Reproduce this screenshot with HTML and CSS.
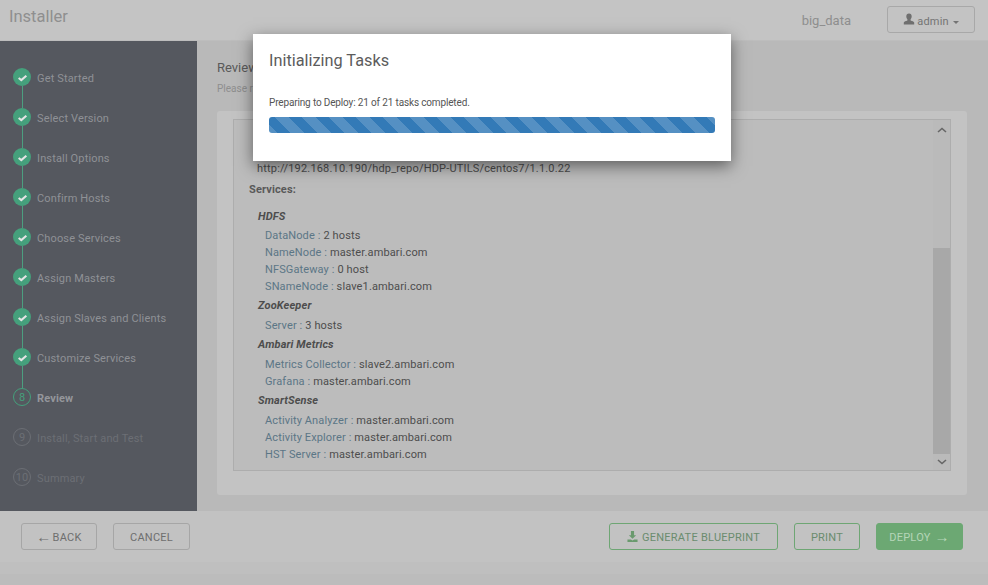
FILE: index.html
```html
<!DOCTYPE html>
<html lang="en">
<head>
<meta charset="utf-8">
<title>Installer</title>
<link rel="stylesheet" href="styles.css">
</head>
<body>
<div class="app">
  <header class="topbar">
    <div class="brand">Installer</div>
    <div class="cluster">big_data</div>
    <button class="user-btn">
      <svg class="user-icon" viewBox="0 0 12 12"><path d="M6 0.5c-1.800 0-2.700 1.300-2.700 3 0 1.200.5 2.200 1.100 2.800v1.100c-1.600.5-3.400 1-3.600 2.200v1.900h10.400v-1.900c-.2-1.200-2-1.700-3.600-2.200v-1.100c.6-.6 1.100-1.600 1.100-2.800 0-1.700-.9-3-2.700-3z"/></svg>
      <span>admin</span><i class="caret"></i>
    </button>
  </header>
  <div class="body">
    <nav class="steps">
      <div class="step done"><span class="dot"><svg viewBox="0 0 12 12"><path d="M1.800 6.500l2.900 2.300 5.500-4.800" /></svg></span><span class="label">Get Started</span></div>
      <div class="step done"><span class="dot"><svg viewBox="0 0 12 12"><path d="M1.800 6.500l2.900 2.300 5.500-4.800" /></svg></span><span class="label">Select Version</span></div>
      <div class="step done"><span class="dot"><svg viewBox="0 0 12 12"><path d="M1.800 6.500l2.900 2.300 5.500-4.800" /></svg></span><span class="label">Install Options</span></div>
      <div class="step done"><span class="dot"><svg viewBox="0 0 12 12"><path d="M1.800 6.500l2.900 2.300 5.500-4.800" /></svg></span><span class="label">Confirm Hosts</span></div>
      <div class="step done"><span class="dot"><svg viewBox="0 0 12 12"><path d="M1.800 6.500l2.900 2.300 5.500-4.800" /></svg></span><span class="label">Choose Services</span></div>
      <div class="step done"><span class="dot"><svg viewBox="0 0 12 12"><path d="M1.800 6.500l2.900 2.300 5.500-4.800" /></svg></span><span class="label">Assign Masters</span></div>
      <div class="step done"><span class="dot"><svg viewBox="0 0 12 12"><path d="M1.800 6.500l2.900 2.300 5.500-4.800" /></svg></span><span class="label">Assign Slaves and Clients</span></div>
      <div class="step done"><span class="dot"><svg viewBox="0 0 12 12"><path d="M1.800 6.500l2.900 2.300 5.500-4.800" /></svg></span><span class="label">Customize Services</span></div>
      <div class="step current"><span class="dot">8</span><span class="label">Review</span></div>
      <div class="step todo"><span class="dot">9</span><span class="label">Install, Start and Test</span></div>
      <div class="step todo"><span class="dot">10</span><span class="label">Summary</span></div>
    </nav>
    <main class="content">
      <h2 class="title">Review</h2>
      <p class="subtitle">Please review the configuration before installation</p>
      <section class="panel">
        <div class="review-box">
          <div class="review-scroll">
            <div class="url">http://192.168.10.190/hdp_repo/HDP-UTILS/centos7/1.1.0.22</div>
            <div class="services">Services:</div>
            <div class="svc first">HDFS</div>
            <div class="row"><b>DataNode :</b> 2 hosts</div>
            <div class="row"><b>NameNode :</b> master.ambari.com</div>
            <div class="row"><b>NFSGateway :</b> 0 host</div>
            <div class="row"><b>SNameNode :</b> slave1.ambari.com</div>
            <div class="svc">ZooKeeper</div>
            <div class="row"><b>Server :</b> 3 hosts</div>
            <div class="svc">Ambari Metrics</div>
            <div class="row"><b>Metrics Collector :</b> slave2.ambari.com</div>
            <div class="row"><b>Grafana :</b> master.ambari.com</div>
            <div class="svc">SmartSense</div>
            <div class="row"><b>Activity Analyzer :</b> master.ambari.com</div>
            <div class="row"><b>Activity Explorer :</b> master.ambari.com</div>
            <div class="row"><b>HST Server :</b> master.ambari.com</div>
          </div>
          <div class="scrollbar">
            <svg class="arrow up" viewBox="0 0 10 6"><path d="M1 5l4-3.500 4 3.500"/></svg>
            <div class="track"><div class="thumb"></div></div>
            <svg class="arrow" viewBox="0 0 10 6"><path d="M1 1l4 3.500 4-3.500"/></svg>
          </div>
        </div>
      </section>
    </main>
  </div>
  <footer class="actions">
    <button class="btn back"><span class="arr">&#8592;</span> BACK</button>
    <button class="btn cancel">CANCEL</button>
    <span class="spacer"></span>
    <button class="btn green blueprint">
      <svg class="dl" viewBox="0 0 12 12"><path d="M4.300 0h3.400v4.500h2.300L6 8.500 2 4.500h2.300zM0.500 9.300h3.700L6 10.300l1.800-1h3.700V12H.5z"/></svg>
      GENERATE BLUEPRINT</button>
    <button class="btn green print">PRINT</button>
    <button class="btn solid">DEPLOY <span class="arr">&#8594;</span></button>
  </footer>
  <div class="bottom"></div>
</div>
<div class="modal">
  <h3 class="modal-title">Initializing Tasks</h3>
  <p class="modal-text">Preparing to Deploy: 21 of 21 tasks completed.</p>
  <div class="progress"></div>
</div>
</body>
</html>
```
FILE: styles.css
```css
* { box-sizing: border-box; }
html, body { margin: 0; height: 100%; overflow: hidden; }
body { font-family: Roboto, "Liberation Sans", sans-serif; background: #bcbcbc; position: relative; }
.app { height: 585px; display: flex; flex-direction: column; }

.topbar { height: 41px; flex: none; display: flex; align-items: flex-start; background: #c4c4c4; border-bottom: 1px solid #bdbdbd; }
.brand { margin: 6px 0 0 9px; font-size: 16.500px; line-height: 22px; color: #8f8f8f; flex: 1; }
.cluster { margin: 13px 36px 0 0; font-size: 13px; line-height: 16px; color: #8e8e8e; }
.user-btn { margin: 6px 13px 0 0; width: 88px; height: 27px; display: flex; align-items: center; justify-content: center; gap: 2px; padding: 3px 0 0; background: #c3c3c3; border: 1px solid #a8a8a8; border-radius: 3px; font: 11px Roboto, sans-serif; letter-spacing: .2px; color: #747474; }
.user-icon { width: 12px; height: 12px; fill: #6f6f6f; margin-top: -4px; }
.caret { width: 0; height: 0; border: 3px solid transparent; border-top-color: #747474; border-bottom: 0; margin-left: 2px; margin-top: 2px; }

.body { height: 470px; flex: none; display: flex; }
.steps { width: 197px; flex: none; background: #55585f; padding-top: 27px; }
.step { height: 40px; display: flex; align-items: flex-start; padding-left: 13px; position: relative; }
.step.done::after { content: ""; position: absolute; left: 22px; top: 18px; width: 1px; height: 22px; background: #4c9f80; }
.dot { width: 18px; height: 18px; border-radius: 50%; flex: none; display: flex; align-items: center; justify-content: center; font-size: 11px; line-height: 1; position: relative; z-index: 1; }
.dot svg { width: 11px; height: 11px; fill: none; stroke: #e4e4e4; stroke-width: 2.200; }
.label { margin: 1px 0 0 6px; font-size: 11px; line-height: 20px; letter-spacing: .15px; color: #8f9196; }
.done .dot { background: #45a07c; }
.current .dot { border: 1px solid #45a07c; color: #45a07c; }
.current .label { font-weight: 700; color: #94969b; }
.todo .dot { border: 1px solid #6c6f75; color: #6c6f75; }
.todo .label { color: #6c6f75; }

.content { flex: 1; background: #b9b9b9; padding: 19px 21px 16px 20px; display: flex; flex-direction: column; }
.title { margin: 0; font-size: 13px; line-height: 16px; font-weight: 400; color: #5a5a5a; }
.subtitle { margin: 6px 0 0; font-size: 10px; line-height: 14px; color: #8e8e8e; white-space: nowrap; }
.panel { margin-top: 15px; flex: 1; background: #c3c3c3; border-radius: 3px; padding: 8px 16px 24px; display: flex; min-height: 0; }
.review-box { flex: 1; display: flex; border: 1px solid #adadad; background: #bcbcbc; min-width: 0; }
.review-scroll { flex: 1; overflow: hidden; display: flex; flex-direction: column; justify-content: flex-end; padding: 0 0 7px 15px; font-size: 11px; line-height: 17px; color: #4d4d4d; letter-spacing: .13px; }
.url { padding-left: 8px; font-size: 11px; letter-spacing: .18px; }
.services { margin-top: 4px; font-weight: 700; color: #595959; }
.svc { font-weight: 700; font-style: italic; color: #4d4d4d; padding-left: 9px; margin: 2px 0 3px; line-height: 17px; }
.svc.first { margin: 10px 0 2px; }
.row { padding-left: 16px; }
.row b { font-weight: 400; color: #5b7686; letter-spacing: .12px; }
.scrollbar { width: 17px; flex: none; display: flex; flex-direction: column; align-items: center; background: #bababa; }
.arrow { width: 10px; height: 6px; fill: none; stroke: #666; stroke-width: 1.600; flex: none; margin: 5px 0; }
.arrow.up { margin-top: 7px; }
.track { flex: 1; width: 100%; display: flex; align-items: flex-end; }
.thumb { width: 100%; height: 206px; background: #a8a8a8; }

.actions { height: 51px; flex: none; display: flex; align-items: flex-start; gap: 16px; padding: 12px 25px 0 21px; background: #c2c2c2; }
.btn { height: 27px; padding: 2px 0 0; border: 1px solid #a6a6a6; border-radius: 3px; background: transparent; font: 11px Roboto, sans-serif; letter-spacing: .25px; color: #6e6e6e; display: flex; align-items: center; justify-content: center; gap: 4px; }
.btn .arr { font-size: 15px; line-height: 12px; margin-top: -1px; }
.back { width: 76px; gap: 1px; }
.cancel { width: 77px; }
.spacer { flex: 1; }
.green { border-color: #6ea674; color: #6a8c6e; }
.blueprint { width: 169px; }
.print { width: 66px; }
.solid { width: 87px; background: #6ca873; border-color: #6ca873; color: #b5d6b8; }
.dl { width: 11px; height: 11px; fill: #6a9a6e; margin-top: -3px; }
.bottom { flex: 1; background: linear-gradient(#bfbfbf 0 12px, #bcbcbc 12px); }

.modal { position: absolute; left: 253px; top: 34px; width: 478px; height: 127px; background: #fff; box-shadow: 0 5px 15px rgba(0,0,0,.5); padding: 16px 16px 0; }
.modal-title { margin: 1px 0 0; font-size: 16.300px; line-height: 20px; font-weight: 400; color: #5c5c5c; }
.modal-text { margin: 25px 0 0; font-size: 10px; line-height: 14px; letter-spacing: -.15px; color: #555; }
.progress { margin-top: 7px; height: 16px; border-radius: 3px; background-color: #337ab7; background-image: linear-gradient(45deg, rgba(255,255,255,.17) 25%, transparent 25%, transparent 50%, rgba(255,255,255,.17) 50%, rgba(255,255,255,.17) 75%, transparent 75%, transparent); background-size: 27px 27px; background-position: 6px 0; }
```
